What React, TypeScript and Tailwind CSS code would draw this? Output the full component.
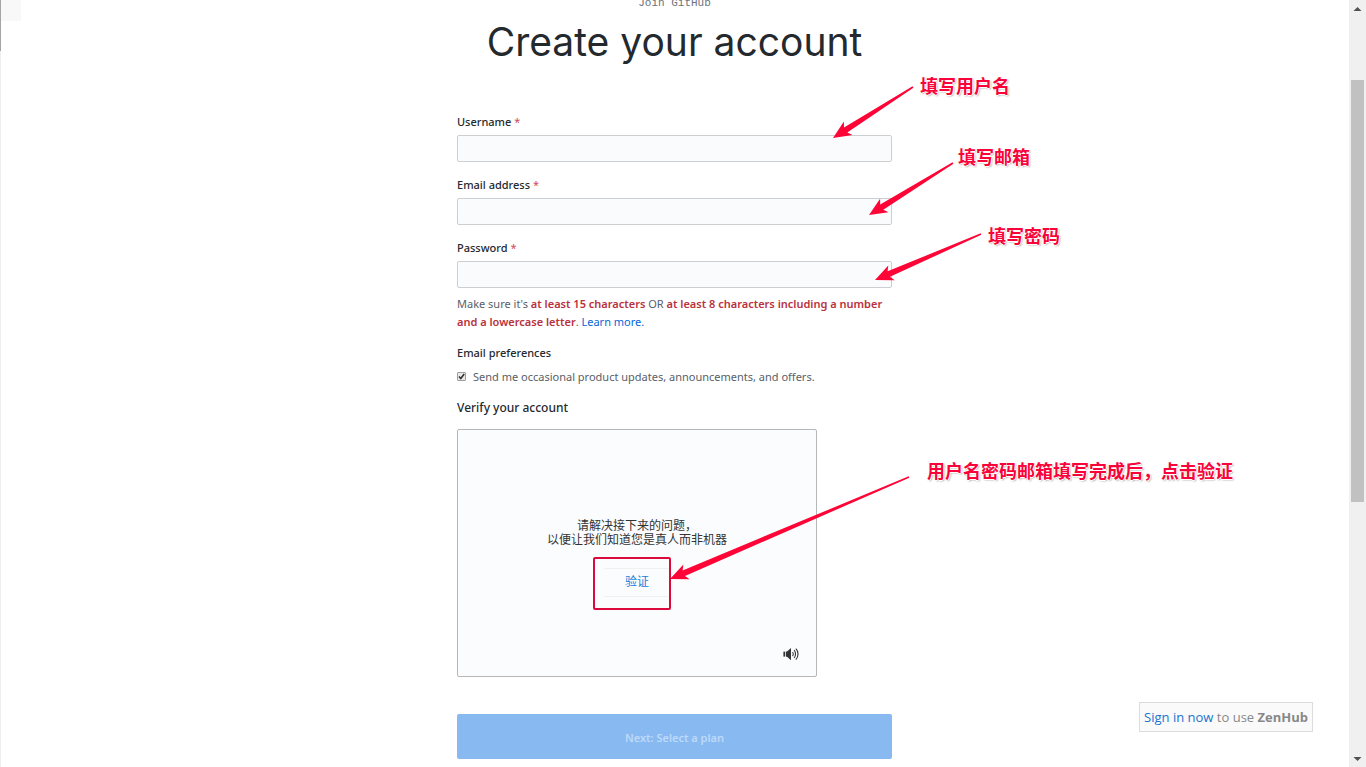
import React, { useState } from 'react';

interface Point {
  x: number;
  y: number;
}

interface FieldProps {
  id: string;
  label: string;
  type: string;
}

interface ArrowProps {
  from: Point;
  to: Point;
}

const Field: React.FC<FieldProps> = ({ id, label, type }) => (
  <div className="mb-[14px]">
    <label htmlFor={id} className="mb-1 block font-medium">
      {label} <span className="font-normal text-[#d0485a]">*</span>
    </label>
    <input
      id={id}
      type={type}
      required
      className="block h-[27px] w-full rounded-xs border border-[#cbcfd2] bg-[#fafbfd] px-2 outline-none"
    />
  </div>
);

// Tapered arrow: thin at the tail, wide barbed head at the tip
const Arrow: React.FC<ArrowProps> = ({ from, to }) => {
  const dx = from.x - to.x;
  const dy = from.y - to.y;
  const len = Math.hypot(dx, dy);
  const ux = dx / len;
  const uy = dy / len;
  const at = (along: number, side: number) =>
    `${(to.x + ux * along - uy * side).toFixed(1)},${(to.y + uy * along + ux * side).toFixed(1)}`;
  const points = [at(0, 0), at(18, 8), at(15, 3), at(len, 0.8), at(len, -0.8), at(15, -3), at(18, -8)];
  return <polygon points={points.join(' ')} fill="#ff0436" />;
};

const noteClass =
  "absolute whitespace-nowrap font-['Liberation_Sans','Noto_Sans_CJK_SC',sans-serif] text-lg leading-6 font-bold text-[#f8043a] [text-shadow:1px_0_#fff,-1px_0_#fff,0_1px_#fff,0_-1px_#fff,1px_1px_2px_#888]";

const Annotations: React.FC = () => (
  <div className="pointer-events-none absolute top-0 left-0">
    <svg width="460" height="600" className="absolute top-0 left-0 max-w-none overflow-visible" aria-hidden="true">
      <Arrow from={{ x: 456, y: 87 }} to={{ x: 376, y: 138 }} />
      <Arrow from={{ x: 496, y: 163 }} to={{ x: 412, y: 215 }} />
      <Arrow from={{ x: 524, y: 234 }} to={{ x: 418, y: 280 }} />
      <Arrow from={{ x: 452, y: 477 }} to={{ x: 213, y: 579 }} />
      <rect x="137" y="558" width="76" height="51" rx="1" fill="none" stroke="#dc0a3c" strokeWidth="2" />
    </svg>
    <span className={`${noteClass} top-[75px] left-[463px]`}>填写用户名</span>
    <span className={`${noteClass} top-[146px] left-[501px]`}>填写邮箱</span>
    <span className={`${noteClass} top-[225px] left-[531px]`}>填写密码</span>
    <span className={`${noteClass} top-[460px] left-[470px]`}>用户名密码邮箱填写完成后，点击验证</span>
  </div>
);

const Captcha: React.FC = () => (
  <div className="relative mt-3 flex h-[248px] w-[360px] max-w-full flex-col items-center rounded-xs border border-[#b4b6b8] bg-[#fafcfe] pt-[89px] font-['Liberation_Sans','Noto_Sans_CJK_SC',sans-serif] text-xs">
    <p className="text-center leading-[14px] text-[#333]">
      请解决接下来的问题，
      <br />
      以便让我们知道您是真人而非机器
    </p>
    <button type="button" className="mt-[21px] h-[29px] w-[66px] rounded-xs border-y border-[#eef0f2] pb-[2px] text-[#1b7fd6]">
      验证
    </button>
    <button type="button" aria-label="Audio challenge" className="absolute right-4 bottom-[13px]">
      <svg width="18" height="18" viewBox="0 0 18 18" fill="none" stroke="#333" strokeWidth="1.1">
        <path d="M1.4 6.6h1.8v5H1.4z" fill="#333" stroke="none" />
        <path d="M4 6.4h1L9 3v12.2l-4-3.4H4z" fill="#333" stroke="none" />
        <path d="M10.6 7c.9 1.2.9 3 0 4.2M12.1 5.2c1.9 2.1 1.9 5.7 0 7.8M13.8 3.6c3 2.9 3 8.1 0 11" />
      </svg>
    </button>
  </div>
);

const Scrollbar: React.FC = () => (
  <div className="flex w-[17px] shrink-0 flex-col items-center bg-[#f0f0f0]" aria-hidden="true">
    <svg width="17" height="17" viewBox="0 0 17 17">
      <path d="M4.5 11 8.5 7l4 4z" fill="#505050" />
    </svg>
    <div className="flex-[63]" />
    <div className="w-[13px] flex-[422] bg-[#c1c1c1]" />
    <div className="flex-[248]" />
    <svg width="17" height="17" viewBox="0 0 17 17">
      <path d="M4.5 7l4 4 4-4z" fill="#505050" />
    </svg>
  </div>
);

const App: React.FC = () => {
  const [updates, setUpdates] = useState(true);

  return (
    <div className="flex min-h-screen overflow-hidden bg-white font-['Noto_Sans','Noto_Sans_CJK_SC',sans-serif] text-[11px] leading-[18px] text-[#24292e]">
      <div className="relative flex flex-1 justify-center">
        <div className="absolute inset-y-0 left-0 w-px bg-[#eee]" />
        <div className="absolute top-0 left-0 h-[21px] w-[21px] bg-[#f8f8f8]" />
        <div className="absolute top-0 left-0 h-[51px] w-px bg-[#a5a5a5]" />
        <main className="relative w-full max-w-[435px]">
          <header className="-mt-[7px] text-center">
            <p className="font-['Liberation_Mono',monospace] leading-5 text-[#6a737d]">Join GitHub</p>
            <h1 className="font-['Inter',sans-serif] text-[39px] leading-[58px] whitespace-nowrap">Create your account</h1>
          </header>
          <form className="mt-[42px]" onSubmit={e => e.preventDefault()}>
            <Field id="username" label="Username" type="text" />
            <Field id="email" label="Email address" type="email" />
            <Field id="password" label="Password" type="password" />
            <p className="-mt-[7px] text-[#586069]">
              Make sure it's <span className="font-semibold text-[#b8323e]">at least 15 characters</span> OR{' '}
              <span className="font-semibold text-[#b8323e]">at least 8 characters including a number and a lowercase letter</span>.{' '}
              <a href="#" className="text-[#0366d6]">
                Learn more.
              </a>
            </p>
            <h2 className="mt-[13px] font-medium">Email preferences</h2>
            <label className="mt-[6px] flex items-center gap-[7px] text-[#586069]">
              <span className="relative -mt-[2px] block size-[9px]">
                <input
                  type="checkbox"
                  checked={updates}
                  onChange={e => setUpdates(e.target.checked)}
                  className="block size-[9px] appearance-none rounded-[1px] border border-[#a0a0a0] bg-[#e8e8e8]"
                />
                {updates && (
                  <svg viewBox="0 0 9 9" className="pointer-events-none absolute inset-0 size-[9px]">
                    <path d="M2 4.5 3.8 6.5 7.2 2" fill="none" stroke="#333" strokeWidth="1.6" />
                  </svg>
                )}
              </span>
              Send me occasional product updates, announcements, and offers.
            </label>
            <h2 className="mt-[13px] text-xs leading-[18px] font-medium">Verify your account</h2>
            <Captcha />
            <button
              type="submit"
              disabled
              className="mt-[37px] mb-2 block h-[45px] w-full rounded-xs bg-[#88b9f1] pt-[2px] font-semibold text-[#bddaf8]"
            >
              Next: Select a plan
            </button>
          </form>
          <Annotations />
        </main>
      </div>
      <Scrollbar />
      <aside className="fixed right-[53px] bottom-[35px] border border-[#dcdcdc] bg-[#fafafa] px-1 py-[5px] font-['Open_Sans',sans-serif] text-[13px] text-[#888]">
        <a href="#" className="text-[#1a73d0]">
          Sign in now
        </a>{' '}
        to use <strong className="font-bold">ZenHub</strong>
      </aside>
    </div>
  );
};

export default App;
